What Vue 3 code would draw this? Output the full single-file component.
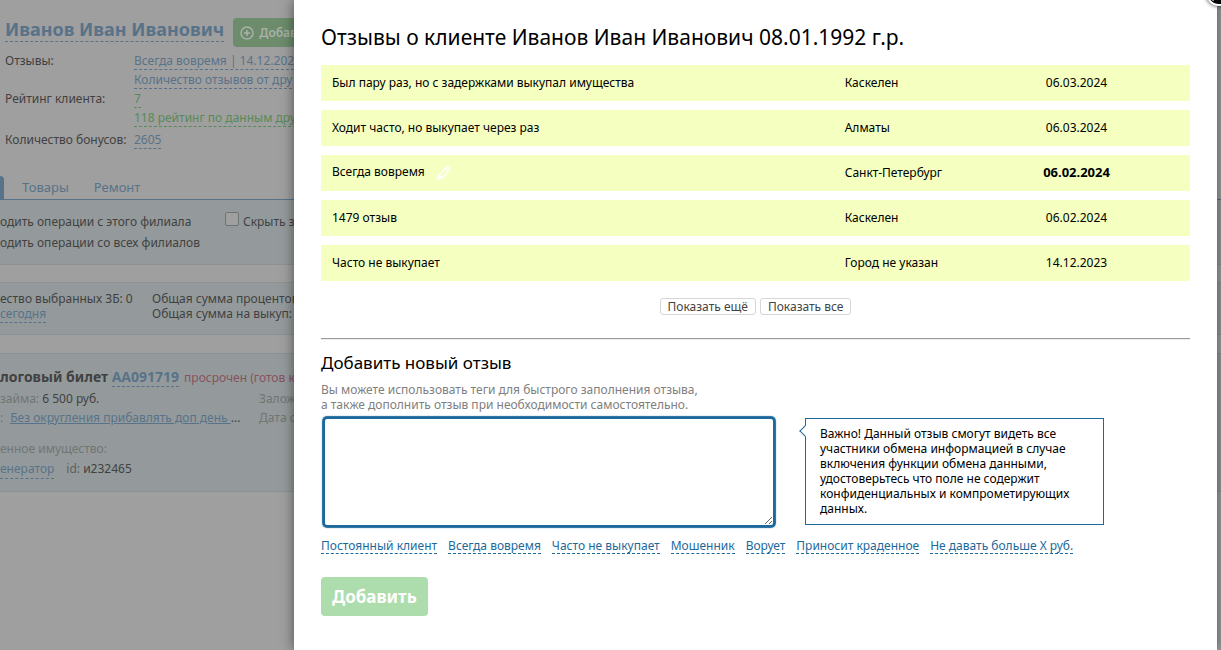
<script setup>
import { ref } from 'vue'

const reviews = [
  { text: 'Был пару раз, но с задержками выкупал имущества', city: 'Каскелен', date: '06.03.2024' },
  { text: 'Ходит часто, но выкупает через раз', city: 'Алматы', date: '06.03.2024' },
  { text: 'Всегда вовремя', city: 'Санкт-Петербург', date: '06.02.2024', own: true },
  { text: '1479 отзыв', city: 'Каскелен', date: '06.02.2024' },
  { text: 'Часто не выкупает', city: 'Город не указан', date: '14.12.2023' }
]

const tags = [
  'Постоянный клиент',
  'Всегда вовремя',
  'Часто не выкупает',
  'Мошенник',
  'Ворует',
  'Приносит краденное',
  'Не давать больше X руб.'
]

const draft = ref('')

function addTag(tag) {
  draft.value = draft.value ? `${draft.value}, ${tag}` : tag
}
</script>

<template>
  <div class="screen">
    <div class="page">
      <header class="client">
        <h1><a href="#" class="dashed">Иванов Иван Иванович</a></h1>
        <button type="button" class="add-op">
          <svg width="14" height="14" viewBox="0 0 14 14" fill="none" stroke="currentColor" stroke-width="1.5" aria-hidden="true">
            <circle cx="7" cy="7" r="6" />
            <path d="M7 4v6M4 7h6" />
          </svg>
          Добав
        </button>
      </header>

      <dl class="facts">
        <dt>Отзывы:</dt>
        <dd><a href="#" class="dashed">Всегда вовремя | 14.12.202</a></dd>
        <dd><a href="#" class="dashed">Количество отзывов от дру</a></dd>
        <dt>Рейтинг клиента:</dt>
        <dd><a href="#" class="dashed green">7</a></dd>
        <dd><a href="#" class="dashed green">118 рейтинг по данным дру</a></dd>
        <dt class="bonus">Количество бонусов:</dt>
        <dd class="bonus"><a href="#" class="dashed">2605</a></dd>
      </dl>

      <nav class="tabs">
        <span class="tab-active"></span>
        <a href="#">Товары</a>
        <a href="#">Ремонт</a>
      </nav>

      <section class="panel filters">
        <div class="filter-row">
          <span class="branch">одить операции с этого филиала</span>
          <label class="check"><input type="checkbox" /> Скрыть з</label>
        </div>
        <div class="filter-row">одить операции со всех филиалов</div>
      </section>

      <section class="panel totals">
        <div class="selected">
          <div>ество выбранных ЗБ: 0</div>
          <a href="#" class="dashed">сегодня</a>
        </div>
        <div>
          <div>Общая сумма процентов</div>
          <div>Общая сумма на выкуп:</div>
        </div>
      </section>

      <section class="panel ticket">
        <div class="ticket-title">
          <strong>логовый билет <a href="#" class="dashed">АА091719</a></strong>
          <span class="red">просрочен (готов к</span>
        </div>
        <div class="ticket-row">
          <span class="ticket-main"><span class="muted">займа:</span> 6 500 руб.</span>
          <span class="muted">Залож</span>
        </div>
        <div class="ticket-row">
          <span class="ticket-main"><span class="muted colon">:</span><a href="#" class="rule">Без округления прибавлять доп день </a>...</span>
          <span class="muted">Дата с</span>
        </div>
        <div class="muted goods">енное имущество:</div>
        <div class="item">
          <a href="#" class="dashed">енератор</a>
          <span><span class="id">id:</span> и232465</span>
        </div>
      </section>
    </div>

    <main class="modal" role="dialog" aria-labelledby="modal-title">
      <button type="button" class="close" aria-label="Закрыть">
        <svg width="20" height="20" viewBox="0 0 20 20" fill="none" stroke="#fff" stroke-width="3" aria-hidden="true">
          <path d="M3 3l14 14M17 3L3 17" />
        </svg>
      </button>

      <h2 id="modal-title">Отзывы о клиенте Иванов Иван Иванович 08.01.1992 г.р.</h2>

      <table class="reviews">
        <tbody>
          <tr v-for="(r, i) in reviews" :key="i">
            <td class="col-text">
              {{ r.text }}
              <button v-if="r.own" type="button" class="edit" aria-label="Изменить">
                <svg width="14" height="14" viewBox="0 0 14 14" fill="none" stroke="currentColor" stroke-width="1.5" stroke-linejoin="round" aria-hidden="true">
                  <path d="M1 13l1-4 7.500-7.500q1-1 2 0l1 1q1 1 0 2L5 12z" />
                  <path d="M8.500 2.500l3 3" />
                  <path d="M1 13l1-4 3 3z" fill="currentColor" />
                </svg>
              </button>
            </td>
            <td class="col-city">{{ r.city }}</td>
            <td class="col-date" :class="{ own: r.own }">{{ r.date }}</td>
          </tr>
        </tbody>
      </table>

      <div class="more">
        <button type="button">Показать ещё</button>
        <button type="button">Показать все</button>
      </div>

      <hr />

      <form @submit.prevent>
        <h3><label for="review">Добавить новый отзыв</label></h3>
        <p class="hint">
          Вы можете использовать теги для быстрого заполнения отзыва,<br />
          а также дополнить отзыв при необходимости самостоятельно.
        </p>
        <div class="entry">
          <textarea id="review" v-model="draft"></textarea>
          <aside class="notice">
            Важно! Данный отзыв смогут видеть все участники обмена информацией в случае
            включения функции обмена данными, удостоверьтесь что поле не содержит
            конфиденциальных и компрометирующих данных.
          </aside>
        </div>
        <div class="tags">
          <a v-for="t in tags" :key="t" href="#" @click.prevent="addTag(t)">{{ t }}</a>
        </div>
        <button type="submit" class="submit">Добавить</button>
      </form>
    </main>
  </div>
</template>

<style>
body {
  margin: 0;
}
</style>

<style scoped>
.screen {
  position: relative;
  min-height: 100vh;
  overflow: hidden;
  background: #9f9f9f;
  color: #414141;
  font: 12px/15px "Noto Sans", "Open Sans", sans-serif;
}

button,
textarea {
  font-family: inherit;
}

a {
  color: #587389;
  text-decoration: none;
}

.page {
  white-space: nowrap;
}

.dashed {
  border-bottom: 1px dashed currentColor;
}

.green {
  color: #588a58;
}

.red {
  color: #88525b;
}

.muted {
  color: #707576;
}

.client {
  display: flex;
  gap: 9px;
  padding: 18px 0 0 5px;
}

h1 {
  margin: 0;
  font-size: 18px;
  line-height: 23px;
}

.client h1 a {
  display: block;
}

.add-op {
  display: flex;
  align-items: center;
  gap: 5px;
  width: 150px;
  height: 29px;
  padding: 0 8px 0 7px;
  border: 0;
  border-radius: 4px;
  background: #6c8c6c;
  color: #a9b2a9;
  font-size: 12px;
  font-weight: 600;
}

.facts {
  display: grid;
  grid-template-columns: 129px 1fr;
  grid-auto-rows: 19px;
  margin: 4px 0 0 5px;
  line-height: 19px;
}

.facts dt {
  grid-column: 1;
}

.facts dd {
  grid-column: 2;
  margin: 0;
}

.facts .dashed {
  display: inline-block;
  line-height: 16px;
}

.facts .bonus {
  padding-top: 3px;
}

.tabs {
  display: flex;
  gap: 25px;
  height: 23px;
  margin-top: 30px;
  border-bottom: 1px solid #587389;
  font-size: 13px;
  line-height: 23px;
}

.tab-active {
  width: 4px;
  margin-right: -7px;
  border-radius: 0 4px 0 0;
  background: #587389;
}

.panel {
  border-bottom: 1px solid #8c9293;
  background: #949a9b;
}

.panel + .panel {
  margin-top: 17px;
  border-top: 1px solid #8c9293;
}

.filters {
  padding: 11px 0;
}

.filter-row {
  display: flex;
  line-height: 21px;
}

.branch {
  width: 225px;
}

.check {
  display: flex;
  gap: 4px;
}

.check input {
  appearance: none;
  width: 14px;
  height: 14px;
  margin: 1px 0 0;
  border: 1px solid #6f7374;
  border-radius: 2px;
  background: #9f9f9f;
}

.totals {
  display: flex;
  padding: 8px 0 13px;
}

.selected {
  width: 152px;
}

.panel.ticket {
  margin-top: 18px;
  padding: 12px 0;
}

.ticket-title {
  display: flex;
  gap: 5px;
  align-items: baseline;
  line-height: 22px;
}

.ticket-title strong {
  font-size: 14px;
}

.ticket-title .dashed {
  display: inline-block;
  line-height: 18px;
}

.ticket-row {
  display: flex;
  line-height: 19px;
}

.ticket-main {
  width: 259px;
}

.colon {
  margin-right: 7px;
}

.rule {
  text-decoration: underline;
}

.goods {
  padding-top: 12px;
  line-height: 20px;
}

.item {
  display: flex;
  gap: 12px;
  align-items: baseline;
  line-height: 20px;
}

.item .dashed {
  line-height: 18px;
}

.id {
  color: #5c6061;
}

.modal {
  position: absolute;
  inset: 0 4px 0 294px;
  padding: 25px 27px;
  background: #fff;
  box-shadow: 0 0 12px rgba(0, 0, 0, 0.5);
  color: #000;
}

.close {
  position: absolute;
  top: -20px;
  right: -15px;
  display: flex;
  align-items: center;
  justify-content: center;
  width: 26px;
  height: 26px;
  padding: 0;
  border: 2px solid #fff;
  border-radius: 50%;
  background: #000;
  box-shadow: 0 0 4px rgba(0, 0, 0, 0.8);
}

h2 {
  margin: 0;
  font-size: 21px;
  font-weight: 400;
  line-height: 24px;
}

.reviews {
  width: 100%;
  margin-top: 7px;
  border-spacing: 0 9px;
  table-layout: fixed;
}

.reviews td {
  box-sizing: border-box;
  height: 36px;
  padding: 0 12px 2px 11px;
  background: #f4ffc0;
}

.col-text {
  width: 59%;
}

.col-city {
  width: 15%;
}

.reviews .col-date {
  text-align: center;
}

.reviews .own {
  font-size: 13px;
  font-weight: 700;
}

.edit {
  height: 14px;
  margin-left: 9px;
  padding: 0;
  border: 0;
  background: none;
  color: #fff;
  vertical-align: middle;
}

.more {
  display: flex;
  justify-content: center;
  gap: 4px;
  margin-top: 8px;
}

.more button {
  height: 17px;
  padding: 0 7px;
  border: 1px solid #d6d6d6;
  border-radius: 3px;
  background: #fff;
  color: #444;
  font-size: 12px;
  line-height: 15px;
}

hr {
  margin: 23px 0 0;
  border: 0;
  border-top: 1px solid #999;
  border-bottom: 1px solid #eee;
}

h3 {
  margin: 13px 0 0;
  font-size: 17px;
  font-weight: 400;
  line-height: 20px;
}

.hint {
  margin: 9px 0 0;
  color: #808080;
}

.entry {
  display: flex;
  align-items: flex-start;
  gap: 30px;
  margin-top: 5px;
}

textarea {
  box-sizing: border-box;
  width: 452px;
  height: 110px;
  margin-left: 2px;
  padding: 4px;
  border: 2px solid #1c699b;
  border-radius: 4px;
  outline: 0;
  background: #fff;
  box-shadow: 0 0 1px 1px #1c699b;
  font-size: 12px;
  resize: both;
}

.notice {
  position: relative;
  box-sizing: border-box;
  width: 299px;
  margin-top: 1px;
  padding: 7px 14px 8px;
  border: 1px solid #1c699b;
}

.notice::before {
  content: "";
  position: absolute;
  top: 8px;
  left: -5px;
  width: 7px;
  height: 7px;
  border: solid #1c699b;
  border-width: 0 0 1px 1px;
  background: #fff;
  transform: rotate(45deg);
}

.tags {
  display: flex;
  flex-wrap: wrap;
  gap: 11px;
  margin-top: 11px;
}

.tags a {
  border-bottom: 1px dashed #1c699b;
  color: #1c699b;
}

.submit {
  height: 39px;
  margin-top: 23px;
  padding: 0 11px;
  border: 0;
  border-radius: 4px;
  background: #addcad;
  color: #fff;
  font-size: 17px;
  font-weight: 700;
}
</style>
